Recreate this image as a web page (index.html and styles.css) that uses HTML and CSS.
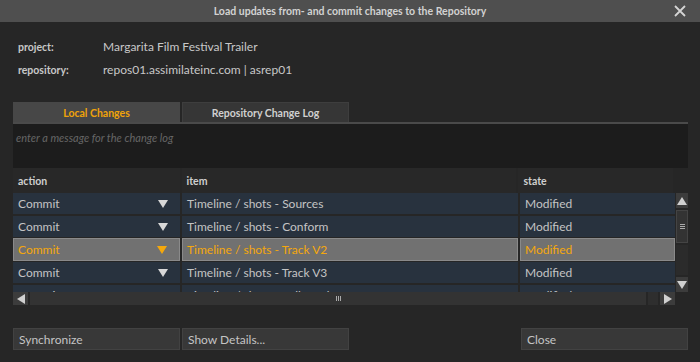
FILE: index.html
```html
<!DOCTYPE html>
<html>
<head>
<meta charset="utf-8">
<link rel="stylesheet" href="styles.css">
</head>
<body>
<div class="window">
  <div class="titlebar">
    <span class="title">Load updates from- and commit changes to the Repository</span>
    <svg class="close" width="12" height="12" viewBox="0 0 12 12"><path d="M1 1L11 11M11 1L1 11" stroke="#d4d4d4" stroke-width="1.8" fill="none"/></svg>
  </div>
  <div class="main">
    <div class="info">
      <div class="info-row"><span class="label">project:</span><span class="value">Margarita Film Festival Trailer</span></div>
      <div class="info-row"><span class="label">repository:</span><span class="value">repos01.assimilateinc.com | asrep01</span></div>
    </div>
    <div class="tabs">
      <div class="tab active">Local Changes</div>
      <div class="tab">Repository Change Log</div>
    </div>
    <div class="message">enter a message for the change log</div>
    <div class="table">
      <div class="thead">
        <div class="th c1">action</div>
        <div class="th c2">item</div>
        <div class="th c3">state</div>
        <div class="th c4"></div>
      </div>
      <div class="tbody">
        <div class="rows">
          <div class="row"><div class="td c1">Commit<span class="tri"></span></div><div class="td c2">Timeline / shots - Sources</div><div class="td c3">Modified</div></div>
          <div class="row"><div class="td c1">Commit<span class="tri"></span></div><div class="td c2">Timeline / shots - Conform</div><div class="td c3">Modified</div></div>
          <div class="row sel"><div class="td c1">Commit<span class="tri"></span></div><div class="td c2">Timeline / shots - Track V2</div><div class="td c3">Modified</div></div>
          <div class="row"><div class="td c1">Commit<span class="tri"></span></div><div class="td c2">Timeline / shots - Track V3</div><div class="td c3">Modified</div></div>
          <div class="row"><div class="td c1">Commit<span class="tri"></span></div><div class="td c2">Timeline / shots - Full Grade</div><div class="td c3">Modified</div></div>
        </div>
        <div class="vscroll">
          <div class="sbtn"><span class="arr up"></span></div>
          <div class="vthumb"><span class="grip-h"></span><span class="grip-h"></span><span class="grip-h"></span></div>
          <div class="vtrack"></div>
          <div class="sbtn"><span class="arr down"></span></div>
        </div>
      </div>
      <div class="hscroll">
        <div class="sbtn h"><span class="arr left"></span></div>
        <div class="hthumb"><span class="grip-v"></span><span class="grip-v"></span><span class="grip-v"></span></div>
        <div class="hcorner"></div>
        <div class="sbtn h"><span class="arr right"></span></div>
      </div>
    </div>
    <div class="buttons">
      <div class="btn b1">Synchronize</div>
      <div class="btn b2">Show Details...</div>
      <div class="spacer"></div>
      <div class="btn b3">Close</div>
    </div>
  </div>
</div>
</body>
</html>
```
FILE: styles.css
```css
* { box-sizing: border-box; }
html, body { margin: 0; padding: 0; }
body {
  width: 700px; height: 362px; overflow: hidden;
  background: #262626;
  font-family: Lato, "Open Sans", sans-serif;
  color: #c8c8c8;
}
.window { width: 700px; height: 362px; background: #262626; }
.titlebar {
  height: 22px; background: #4f4f4f;
  display: flex; align-items: center; justify-content: center;
  position: relative;
}
.title { font-size: 10.5px; font-weight: bold; color: #d2d2d2; }
.close { position: absolute; right: 14px; top: 5px; }
.main { padding: 0 12px 0 13px; }
.info { padding: 13px 0 0 5px; height: 80px; }
.info-row { display: flex; align-items: center; height: 23px; }
.label { width: 85px; font-size: 10.5px; font-weight: bold; color: #c8c8c8; }
.value { font-size: 12px; color: #c8c8c8; }
.tabs {
  display: flex; gap: 2px; height: 22px;
  border-bottom: 2px solid #4a4a4a;
}
.tab {
  width: 167px; height: 20px;
  display: flex; align-items: center; justify-content: center;
  font-size: 10.5px; font-weight: bold; color: #d0d0d0;
  background: #363636; border: 1px solid #3e3e3e; border-bottom: none;
}
.tab.active { background: #474747; color: #f0a30a; border-color: #474747; }
.message {
  height: 44px; background: #1c1c1c;
  font-size: 11px; font-style: italic; color: #666;
  padding: 7px 0 0 3px;
}
.thead { display: flex; height: 25px; gap: 2px; }
.th {
  font-size: 10.5px; font-weight: bold; color: #cfcfcf;
  display: flex; align-items: center; padding-left: 5px;
  background: #282828;
}
.c1 { width: 167px; }
.c2 { width: 336px; }
.c3 { width: 155px; }
.th.c4 { width: 13px; padding: 0; background: #262626; }
.tbody { display: flex; height: 99px; gap: 1px; }
.rows { width: 662px; overflow: hidden; display: flex; flex-direction: column; gap: 2px; }
.row { display: flex; gap: 2px; height: 21px; flex: none; }
.td {
  background: #28323e; height: 21px;
  display: flex; align-items: center; padding-left: 5px;
  font-size: 12px; color: #c4c4c4; position: relative;
}
.row.sel { height: 23px; margin: -1px 0; }
.row.sel .td { height: 23px; background: #717171; color: #f5a80c; border: 1px solid #8a8a8a; padding-left: 4px; }
.tri {
  position: absolute; right: 12px; top: 7px;
  width: 0; height: 0;
  border-left: 5px solid transparent; border-right: 5px solid transparent;
  border-top: 8px solid #d8d8d8;
}
.row.sel .tri { border-top-color: #f5a80c; }
.vscroll { width: 12px; display: flex; flex-direction: column; gap: 2px; }
.sbtn {
  height: 15px; width: 12px; background: #3c3c3c;
  display: flex; align-items: center; justify-content: center; flex: none;
}
.vthumb {
  height: 33px; background: #333; border: 1px solid #444;
  display: flex; flex-direction: column; align-items: center; justify-content: center; gap: 1px;
}
.grip-h { width: 5px; height: 1px; background: #aaa; }
.vtrack { flex: 1; background: #2b2b2b; }
.arr { width: 0; height: 0; }
.arr.up { border-left: 5px solid transparent; border-right: 5px solid transparent; border-bottom: 8px solid #d0d0d0; }
.arr.down { border-left: 5px solid transparent; border-right: 5px solid transparent; border-top: 8px solid #d0d0d0; }
.arr.left { border-top: 5px solid transparent; border-bottom: 5px solid transparent; border-right: 8px solid #d0d0d0; }
.arr.right { border-top: 5px solid transparent; border-bottom: 5px solid transparent; border-left: 8px solid #d0d0d0; }
.hscroll { display: flex; height: 13px; width: 662px; gap: 2px; background: #262626; }
.sbtn.h { width: 15px; height: 13px; }
.hthumb {
  flex: 1; background: #333;
  display: flex; align-items: center; justify-content: center; gap: 1px;
}
.grip-v { width: 1px; height: 5px; background: #aaa; }
.hcorner { width: 10px; background: #2e2e2e; }
.buttons { display: flex; gap: 2px; margin-top: 23px; height: 22px; }
.btn {
  height: 22px; background: #383838; border: 1px solid #424242;
  display: flex; align-items: center; padding-left: 5px;
  font-size: 12px; color: #c4c4c4;
}
.b1, .b2 { width: 167px; }
.spacer { flex: 1; }
.b3 { width: 167px; }
```
